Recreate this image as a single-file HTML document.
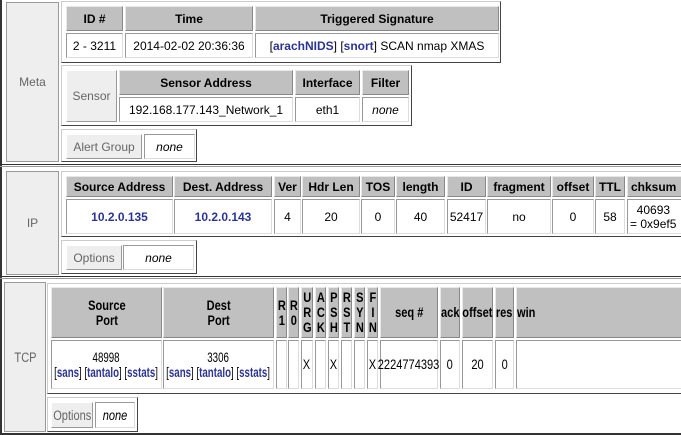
<!DOCTYPE html><html><head><style>
body{margin:0;width:681px;height:435px;background:#fff;position:relative;overflow:hidden;font-family:"Liberation Sans",sans-serif;font-size:12px;color:#000}
div{position:absolute;box-sizing:border-box}
.c{display:flex;align-items:center;justify-content:center;text-align:center;line-height:14px;white-space:nowrap}
.h{background:#c0c0c0;font-weight:bold;border:1px solid;border-color:#e8e8e8 #888 #888 #e8e8e8}
.d{background:#fff;border:1px solid;border-color:#999 #ddd #ddd #999}
.box{border:1px solid;border-color:#ccc #444 #444 #ccc}
.lab{background:#eee;color:#666;border:1px solid;border-color:#fff #999 #999 #fff}
.sec{background:#eee;color:#666;border:1px solid #999}
.i{font-style:italic}
a{color:#2a3593;font-weight:bold;text-decoration:none}
.hl{left:0;width:681px;height:3px;border-top:1px solid #333;border-bottom:1px solid #999}
.t{font-size:13.5px;line-height:15px}
.t>span{display:inline-block;transform:scaleX(.82);transform-origin:center}
.t>span.n{transform:scaleX(.72)}
</style></head><body>
<div style="left:0;top:0;width:2px;height:435px;background:#333"></div>
<div class="hl" style="top:164px"></div>
<div class="hl" style="top:276px"></div>
<div style="left:0;top:433px;width:681px;height:2px;background:#333"></div>

<div class="sec c" style="left:6px;top:2px;width:53px;height:160px">Meta</div>
<div class="box" style="left:61px;top:1px;width:440px;height:62px"></div>
<div class="h c" style="left:66px;top:6px;width:57px;height:25px">ID #</div>
<div class="h c" style="left:125px;top:6px;width:128px;height:25px">Time</div>
<div class="h c" style="left:255px;top:6px;width:244px;height:25px">Triggered Signature</div>
<div class="d c" style="left:66px;top:33px;width:57px;height:25px">2 - 3211</div>
<div class="d c" style="left:125px;top:33px;width:128px;height:25px">2014-02-02 20:36:36</div>
<div class="d c" style="left:255px;top:33px;width:244px;height:25px"><span>[<a>arachNIDS</a>]&nbsp;[<a>snort</a>] SCAN nmap XMAS</span></div>

<div class="box" style="left:61px;top:65px;width:351px;height:61px"></div>
<div class="lab c" style="left:66px;top:70px;width:51px;height:52px">Sensor</div>
<div class="h c" style="left:119px;top:70px;width:174px;height:25px">Sensor Address</div>
<div class="h c" style="left:295px;top:70px;width:65px;height:25px">Interface</div>
<div class="h c" style="left:362px;top:70px;width:47px;height:25px">Filter</div>
<div class="d c" style="left:119px;top:97px;width:174px;height:25px">192.168.177.143_Network_1</div>
<div class="d c" style="left:295px;top:97px;width:65px;height:25px">eth1</div>
<div class="d c i" style="left:362px;top:97px;width:47px;height:25px">none</div>

<div class="box" style="left:61px;top:129px;width:136px;height:33px"></div>
<div class="lab c" style="left:66px;top:134px;width:76px;height:25px">Alert Group</div>
<div class="d c i" style="left:144px;top:134px;width:51px;height:25px">none</div>

<div class="sec c" style="left:6px;top:171px;width:53px;height:104px">IP</div>
<div class="box" style="left:61px;top:171px;width:625px;height:66px"></div>
<div class="h c" style="left:66px;top:176px;width:107px;height:21px">Source Address</div>
<div class="h c" style="left:174px;top:176px;width:98px;height:21px">Dest. Address</div>
<div class="h c" style="left:274px;top:176px;width:27px;height:21px">Ver</div>
<div class="h c" style="left:302px;top:176px;width:58px;height:21px">Hdr Len</div>
<div class="h c" style="left:361px;top:176px;width:34px;height:21px">TOS</div>
<div class="h c" style="left:396px;top:176px;width:49px;height:21px">length</div>
<div class="h c" style="left:447px;top:176px;width:39px;height:21px">ID</div>
<div class="h c" style="left:487px;top:176px;width:64px;height:21px">fragment</div>
<div class="h c" style="left:552px;top:176px;width:42px;height:21px">offset</div>
<div class="h c" style="left:595px;top:176px;width:30px;height:21px">TTL</div>
<div class="h c" style="left:627px;top:176px;width:60px;height:21px;justify-content:flex-start;padding-left:3px">chksum</div>
<div class="d c" style="left:66px;top:199px;width:107px;height:35px"><span><a>10.2.0.135</a></span></div>
<div class="d c" style="left:174px;top:199px;width:98px;height:35px"><span><a>10.2.0.143</a></span></div>
<div class="d c" style="left:274px;top:199px;width:27px;height:35px">4</div>
<div class="d c" style="left:302px;top:199px;width:58px;height:35px">20</div>
<div class="d c" style="left:361px;top:199px;width:34px;height:35px">0</div>
<div class="d c" style="left:396px;top:199px;width:49px;height:35px">40</div>
<div class="d c" style="left:447px;top:199px;width:39px;height:35px">52417</div>
<div class="d c" style="left:487px;top:199px;width:64px;height:35px">no</div>
<div class="d c" style="left:552px;top:199px;width:42px;height:35px">0</div>
<div class="d c" style="left:595px;top:199px;width:30px;height:35px">58</div>
<div class="d c" style="left:627px;top:199px;width:60px;height:35px;justify-content:flex-start;padding-left:2px;text-align:left"><span>&nbsp;&nbsp;40693<br>= 0x9ef5</span></div>

<div class="box" style="left:61px;top:240px;width:136px;height:34px"></div>
<div class="lab c" style="left:66px;top:245px;width:56px;height:25px">Options</div>
<div class="d c i" style="left:123px;top:245px;width:71px;height:25px">none</div>

<div class="sec c t" style="left:4px;top:282px;width:42px;height:150px"><span>TCP</span></div>
<div class="box" style="left:47px;top:283px;width:640px;height:111px"></div>
<div class="h c t" style="left:51px;top:287px;width:111px;height:51px"><span>Source<br>Port</span></div>
<div class="h c t" style="left:163px;top:287px;width:111px;height:51px"><span>Dest<br>Port</span></div>
<div class="h c t" style="left:276px;top:287px;width:11px;height:51px"><span>R<br>1</span></div>
<div class="h c t" style="left:288px;top:287px;width:11px;height:51px"><span>R<br>0</span></div>
<div class="h c t" style="left:301px;top:287px;width:12px;height:51px"><span>U<br>R<br>G</span></div>
<div class="h c t" style="left:315px;top:287px;width:11px;height:51px"><span>A<br>C<br>K</span></div>
<div class="h c t" style="left:328px;top:287px;width:11px;height:51px"><span>P<br>S<br>H</span></div>
<div class="h c t" style="left:341px;top:287px;width:11px;height:51px"><span>R<br>S<br>T</span></div>
<div class="h c t" style="left:354px;top:287px;width:11px;height:51px"><span>S<br>Y<br>N</span></div>
<div class="h c t" style="left:367px;top:287px;width:11px;height:51px"><span>F<br>I<br>N</span></div>
<div class="h c t" style="left:380px;top:287px;width:58px;height:51px"><span>seq #</span></div>
<div class="h c t" style="left:440px;top:287px;width:20px;height:51px"><span>ack</span></div>
<div class="h c t" style="left:462px;top:287px;width:31px;height:51px"><span>offset</span></div>
<div class="h c t" style="left:495px;top:287px;width:19px;height:51px"><span>res</span></div>
<div class="h c t" style="left:516px;top:287px;width:170px;height:51px;justify-content:flex-start;padding-left:0"><span style="transform-origin:left">win</span></div>
<div class="d c t" style="left:51px;top:340px;width:111px;height:49px"><span class="n">48998<br>[<a>sans</a>] [<a>tantalo</a>] [<a>sstats</a>]</span></div>
<div class="d c t" style="left:163px;top:340px;width:111px;height:49px"><span class="n">3306<br>[<a>sans</a>] [<a>tantalo</a>] [<a>sstats</a>]</span></div>
<div class="d c" style="left:276px;top:340px;width:11px;height:49px"></div>
<div class="d c" style="left:288px;top:340px;width:11px;height:49px"></div>
<div class="d c t" style="left:301px;top:340px;width:12px;height:49px"><span>X</span></div>
<div class="d c" style="left:315px;top:340px;width:11px;height:49px"></div>
<div class="d c t" style="left:328px;top:340px;width:11px;height:49px"><span>X</span></div>
<div class="d c" style="left:341px;top:340px;width:11px;height:49px"></div>
<div class="d c" style="left:354px;top:340px;width:11px;height:49px"></div>
<div class="d c t" style="left:367px;top:340px;width:11px;height:49px"><span>X</span></div>
<div class="d c t" style="left:380px;top:340px;width:58px;height:49px"><span>2224774393</span></div>
<div class="d c t" style="left:440px;top:340px;width:20px;height:49px"><span>0</span></div>
<div class="d c t" style="left:462px;top:340px;width:31px;height:49px"><span>20</span></div>
<div class="d c t" style="left:495px;top:340px;width:19px;height:49px"><span>0</span></div>
<div class="d c" style="left:516px;top:340px;width:170px;height:49px"></div>

<div class="box" style="left:47px;top:397px;width:91px;height:35px"></div>
<div class="lab c t" style="left:51px;top:402px;width:42px;height:26px"><span>Options</span></div>
<div class="d c i t" style="left:95px;top:402px;width:40px;height:26px"><span>none</span></div>
</body></html>
